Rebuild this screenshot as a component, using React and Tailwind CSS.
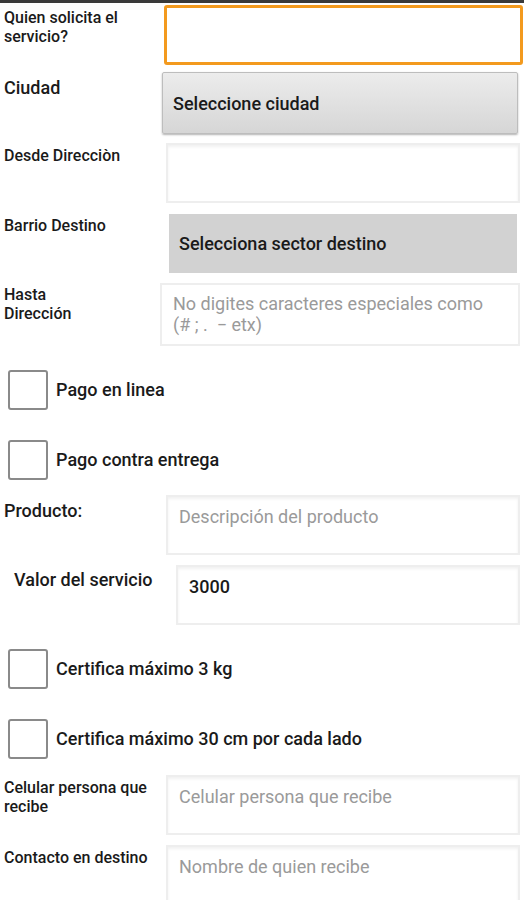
import React from 'react';

function Field({ label, labelClass = '', boxClass, children }) {
    return (
        <div className="flex">
            <div className={`shrink-0 text-[#1a1a1a] font-medium ${labelClass}`}>{label}</div>
            <div className={boxClass}>{children}</div>
        </div>
    );
}

function Check({ label, className = '' }) {
    return (
        <div className={`flex items-center ${className}`}>
            <div className="ml-[8px] h-[40px] w-[40px] rounded-[3px] border-2 border-[#8a8a8a] bg-white" />
            <span className="ml-[8px] text-[18px] leading-[22px] font-medium text-[#1a1a1a]">{label}</span>
        </div>
    );
}

export default function App() {
    const inputBox = 'h-[60px] border-2 border-[#eeeeee] bg-white shadow-[inset_0_2px_3px_rgba(0,0,0,0.06)]';
    const placeholder = 'text-[18px] leading-[22px] text-[#9a9a9a]';
    const small = 'text-[16px] leading-[19px]';
    const big = 'text-[18px] leading-[22px]';

    return (
        <div className="min-h-[900px] w-[524px] bg-white font-['Roboto','Liberation_Sans',sans-serif]">
            <div className="h-[3px] bg-[#3a3a3a]" />

            <Field
                label={<>Quien solicita el<br />servicio?</>}
                labelClass={`w-[164px] pl-[4px] pt-[5px] ${small}`}
                boxClass="mt-[2px] h-[60px] w-[359px] rounded-[3px] border-[3px] border-[#f39a1e] bg-white"
            />

            <Field
                label="Ciudad"
                labelClass={`w-[162px] pl-[4px] pt-[12px] ${big}`}
                boxClass="mt-[7px] flex h-[62px] w-[356px] items-center rounded-[2px] border border-[#bdbdbd] bg-gradient-to-b from-[#ececec] to-[#d6d6d6] pl-[10px] text-[18px] font-medium text-[#1a1a1a] shadow-[0_1px_2px_rgba(0,0,0,0.3)]"
            >
                Seleccione ciudad
            </Field>

            <Field
                label="Desde Direcciòn"
                labelClass={`w-[166px] pl-[4px] pt-[12px] ${small}`}
                boxClass={`mt-[9px] w-[354px] ${inputBox}`}
            />

            <Field
                label="Barrio Destino"
                labelClass={`w-[169px] pl-[4px] pt-[13px] ${small}`}
                boxClass="mt-[11px] flex h-[59px] w-[348px] items-center bg-[#d2d2d2] pl-[10px] text-[18px] font-medium text-[#1a1a1a]"
            >
                Selecciona sector destino
            </Field>

            <Field
                label={<>Hasta<br />Dirección</>}
                labelClass={`w-[160px] pl-[4px] pt-[12px] ${small}`}
                boxClass="mt-[10px] h-[63px] w-[360px] border-2 border-[#eeeeee] bg-white pl-[11px] pt-[8px] text-[18px] leading-[21px] text-[#9a9a9a]"
            >
                No digites caracteres especiales como<br />(# ; .&nbsp; − etx)
            </Field>

            <Check label="Pago en linea" className="mt-[24px]" />
            <Check label="Pago contra entrega" className="mt-[30px]" />

            <Field
                label="Producto:"
                labelClass={`w-[166px] pl-[4px] pt-[20px] ${big}`}
                boxClass={`mt-[15px] w-[354px] pl-[11px] pt-[9px] ${inputBox} ${placeholder}`}
            >
                Descripción del producto
            </Field>

            <Field
                label="Valor del servicio"
                labelClass={`w-[176px] pl-[14px] pt-[14px] ${big}`}
                boxClass={`mt-[10px] w-[344px] pl-[11px] pt-[9px] text-[18px] leading-[22px] font-medium text-[#1a1a1a] ${inputBox}`}
            >
                3000
            </Field>

            <Check label="Certifica máximo 3 kg" className="mt-[24px]" />
            <Check label="Certifica máximo 30 cm por cada lado" className="mt-[30px]" />

            <Field
                label={<>Celular persona que<br />recibe</>}
                labelClass={`w-[166px] pl-[4px] pt-[19px] ${small}`}
                boxClass={`mt-[16px] w-[354px] pl-[11px] pt-[9px] ${inputBox} ${placeholder}`}
            >
                Celular persona que recibe
            </Field>

            <Field
                label="Contacto en destino"
                labelClass={`w-[166px] pl-[4px] pt-[13px] ${small}`}
                boxClass={`mt-[10px] w-[354px] pl-[11px] pt-[9px] ${inputBox} ${placeholder}`}
            >
                Nombre de quien recibe
            </Field>
        </div>
    );
}
